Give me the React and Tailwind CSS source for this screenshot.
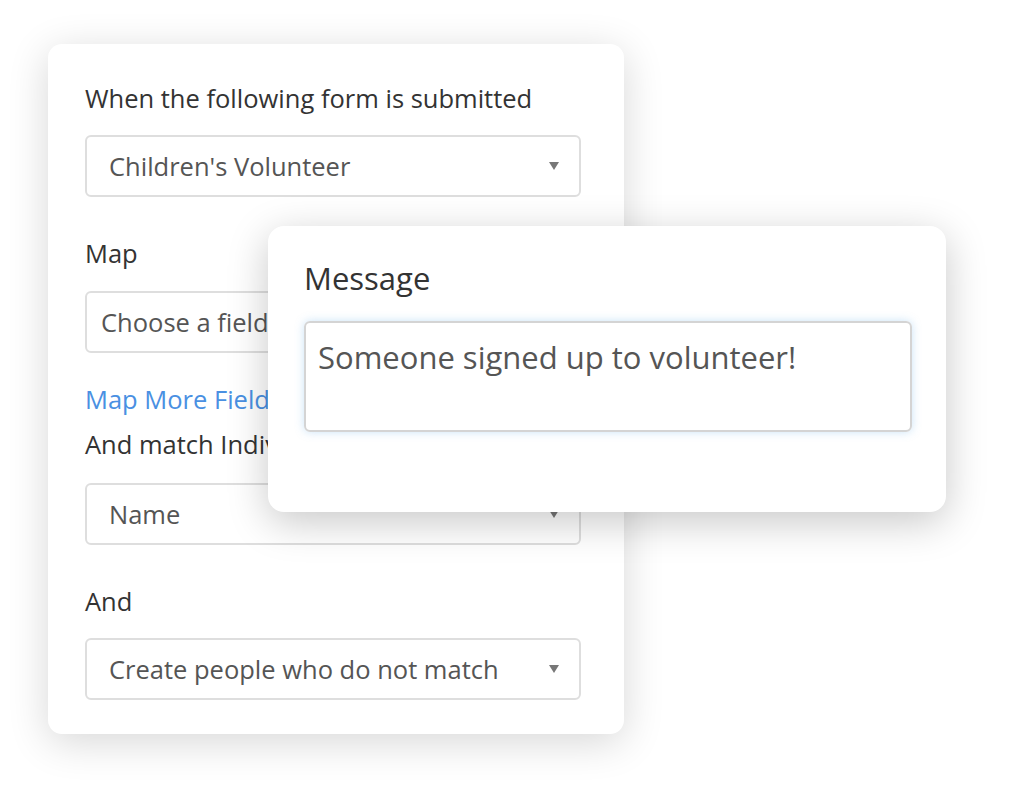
const font = { fontFamily: '"Open Sans", "Noto Sans", sans-serif' };

const Caret = () => (
    <span className="w-0 h-0 border-l-[5px] border-r-[5px] border-t-[8px] border-l-transparent border-r-transparent border-t-[#777]" />
);

const Select = ({ label, className = "", pad = "pl-[22px]" }) => (
    <div className={`h-[62px] w-[496px] rounded-[6px] border-2 border-[#dedede] bg-white flex items-center justify-between ${pad} pr-[20px] ${className}`}>
        <span className="text-[25.5px] text-[#555]">{label}</span>
        <Caret />
    </div>
);

const Label = ({ children, className = "" }) => (
    <div className={`text-[25.5px] leading-[34px] text-[#333] ${className}`}>{children}</div>
);

export default function App() {
    return (
        <div className="relative w-[1034px] h-[786px] bg-white overflow-hidden" style={font}>
            {/* form card */}
            <div className="absolute left-[48px] top-[44px] w-[576px] h-[690px] bg-white rounded-[14px] shadow-[0_8px_40px_rgba(0,0,0,0.16)] pl-[37px] pt-[37px]">
                <Label>When the following form is submitted</Label>
                <Select label="Children's Volunteer" className="mt-[20px]" />
                <Label className="mt-[39px]">Map</Label>
                <Select label="Choose a field" pad="pl-[14px]" className="mt-[21px]" />
                <div className="mt-[29px] text-[25.5px] leading-[34px] text-[#4a90e2]">Map More Fields</div>
                <Label className="mt-[11px]">And match Individuals by</Label>
                <Select label="Name" className="mt-[22px]" />
                <Label className="mt-[39px]">And</Label>
                <Select label="Create people who do not match" className="mt-[20px]" />
            </div>

            {/* message popover */}
            <div className="absolute left-[268px] top-[226px] w-[678px] h-[286px] bg-white rounded-[16px] shadow-[0_10px_40px_rgba(0,0,0,0.22)] pl-[36px] pt-[32px]">
                <div className="text-[31px] leading-[40px] text-[#333]">Message</div>
                <div className="mt-[23px] w-[608px] h-[111px] rounded-[6px] border-2 border-[#d4d4d4] shadow-[0_0_10px_rgba(102,175,233,0.35)] pl-[12px] pt-[14px]">
                    <span className="text-[31px] leading-[40px] text-[#555]">Someone signed up to volunteer!</span>
                </div>
            </div>
        </div>
    );
}
